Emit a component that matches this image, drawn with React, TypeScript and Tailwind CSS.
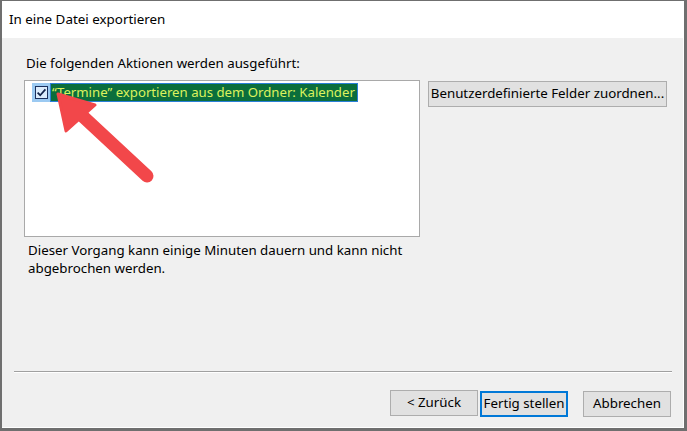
import React from 'react';

function CheckMark() {
  return (
    <svg width="13" height="13" viewBox="0 0 13 13" aria-hidden>
      <rect x="0.5" y="0.5" width="12" height="12" fill="#dcecfc" stroke="#1b2f5c" />
      <path d="M2.6 6.6 L5.2 9.2 L10.4 3.4" fill="none" stroke="#14244a" strokeWidth="1.7" />
    </svg>
  );
}

function Arrow() {
  return (
    <svg
      className="pointer-events-none absolute left-0 top-0"
      width="687"
      height="431"
      viewBox="0 0 687 431"
      aria-hidden
    >
      <line x1="145" y1="175" x2="74" y2="109" stroke="#f2474a" strokeWidth="13" strokeLinecap="round" />
      <polygon
        points="56,93 93,104 64,130"
        fill="#f2474a"
        stroke="#f2474a"
        strokeWidth="3"
        strokeLinejoin="round"
      />
    </svg>
  );
}

function DlgButton({
  children,
  width,
  primary,
}: {
  children: React.ReactNode;
  width: string;
  primary?: boolean;
}) {
  return (
    <button
      type="button"
      className={
        primary
          ? `${width} h-[26px] border-2 border-[#0078d7] bg-[#e1e1e1] text-[13.3px] text-black`
          : `${width} h-[26px] border border-[#adadad] bg-[#e1e1e1] text-[13.3px] text-black`
      }
    >
      {children}
    </button>
  );
}

export default function App() {
  return (
    <div
      className="relative flex h-[431px] w-[687px] flex-col border-b-[3px] border-l-2 border-r-[3px] border-t border-[#6f6f6f] bg-white text-black"
      style={{ fontFamily: '"Noto Sans", "Open Sans", sans-serif' }}
    >
      <div className="flex h-[37px] items-center bg-white pl-[7px] text-[13.4px]">
        In eine Datei exportieren
      </div>

      <div className="flex flex-1 flex-col border-b border-r border-white bg-[#f0f0f0]">
        <div className="pl-[22px] pt-[17px]">
          <div className="h-[16px] pl-[2px] text-[13.3px] leading-[16px]">
            Die folgenden Aktionen werden ausgeführt:
          </div>

          <div className="mt-[9px] flex items-start">
            <div className="flex w-[396px] shrink-0 flex-col">
              <div className="h-[157px] w-[396px] border border-[#a9a9a9] bg-white pl-[7px] pt-[2px]">
                <div className="flex h-[19px] items-center">
                  <span className="flex h-[19px] w-[18px] items-center justify-center bg-[#9ccaf2]">
                    <CheckMark />
                  </span>
                  <span className="flex h-[19px] w-[308px] items-center whitespace-nowrap border border-[#2a7fd8] bg-[#0b6e3c] pl-[1px] text-[13.2px] text-[#dcf25e]">
                    “Termine” exportieren aus dem Ordner: Kalender
                  </span>
                </div>
              </div>
              <div className="mt-[4px] whitespace-nowrap pl-[4px] text-[13.3px]">
                <div className="h-[18px] leading-[18px]">
                  Dieser Vorgang kann einige Minuten dauern und kann nicht
                </div>
                <div className="h-[18px] leading-[18px]">abgebrochen werden.</div>
              </div>
            </div>

            <button
              type="button"
              className="ml-[8px] mt-[1px] h-[26px] w-[239px] whitespace-nowrap border border-[#adadad] bg-[#e1e1e1] text-[13.3px] text-black"
            >
              Benutzerdefinierte Felder zuordnen...
            </button>
          </div>
        </div>

        <div className="flex-1" />

        <div className="ml-[12px] mr-[11px] border-b border-t border-b-white border-t-[#a0a0a0]" />

        <div className="flex justify-end pb-[10px] pr-[12px] pt-[17px]">
          <DlgButton width="w-[88px]">&lt; Zurück</DlgButton>
          <div className="ml-[2px]">
            <DlgButton width="w-[88px]" primary>
              Fertig stellen
            </DlgButton>
          </div>
          <div className="ml-[15px]">
            <DlgButton width="w-[88px]">Abbrechen</DlgButton>
          </div>
        </div>
      </div>

      <Arrow />
    </div>
  );
}
